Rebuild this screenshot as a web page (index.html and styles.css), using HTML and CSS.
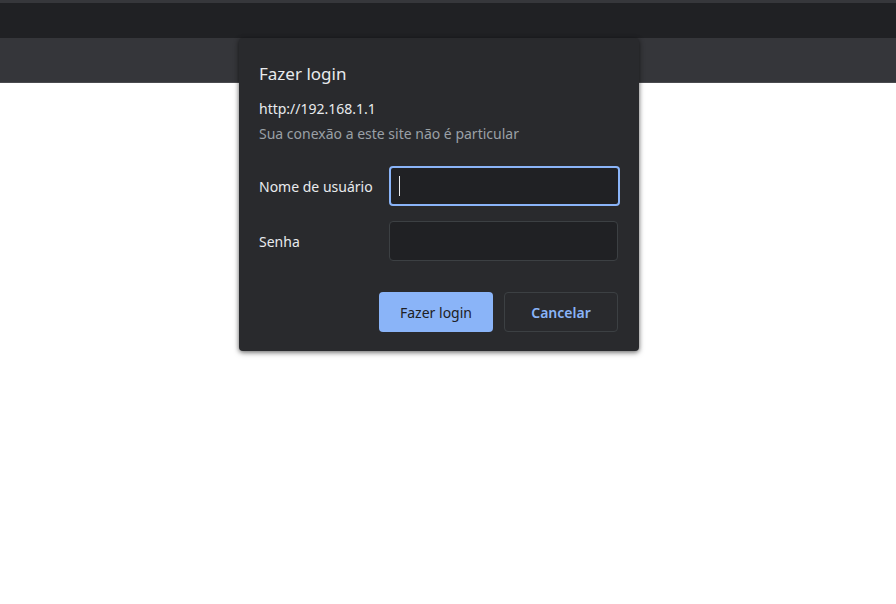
FILE: index.html
```
<!DOCTYPE html>
<html lang="pt">
<head>
<meta charset="utf-8">
<link rel="stylesheet" href="styles.css">
</head>
<body>
<div class="topline"></div>
<div class="tabbar"></div>
<div class="toolbar"></div>
<div class="page">
  <div class="dialog">
    <div class="title">Fazer login</div>
    <div class="origin">http://192.168.1.1</div>
    <div class="warn">Sua conexão a este site não é particular</div>
    <div class="fields">
      <label class="lbl">Nome de usuário</label>
      <div class="input focus"><span class="caret"></span></div>
      <label class="lbl">Senha</label>
      <div class="input"></div>
    </div>
    <div class="actions">
      <button class="btn primary">Fazer login</button>
      <button class="btn secondary">Cancelar</button>
    </div>
  </div>
</div>
</body>
</html>
```
FILE: styles.css
```
* { box-sizing: border-box; }
html, body { margin: 0; padding: 0; }
body {
  width: 896px; height: 604px; overflow: hidden;
  background: #ffffff;
  font-family: "Noto Sans", "Open Sans", sans-serif;
  position: relative;
}
.topline { height: 3px; background: #36373b; }
.tabbar { height: 35px; background: #202124; }
.toolbar { height: 45px; background: #35363a; border-bottom: 1px solid #4a4b4f; }
.page { position: absolute; left: 0; top: 38px; width: 896px; }
.dialog {
  position: absolute; left: 239px; top: 0;
  width: 400px; height: 313px;
  background: #292a2d;
  border-radius: 4px;
  box-shadow: 0 1px 4px rgba(0,0,0,0.45), 0 2px 6px rgba(0,0,0,0.25);
  padding: 24px 20px 0 20px;
  color: #e8eaed;
}
.title { font-size: 17px; line-height: 24px; color: #e8eaed; }
.origin { margin-top: 13px; font-size: 14px; line-height: 20px; color: #e8eaed; }
.warn { margin-top: 5px; font-size: 14px; line-height: 20px; color: #9aa0a6; }
.fields {
  margin-top: 22px;
  display: grid;
  grid-template-columns: 130px 230px;
  row-gap: 15px;
  align-items: center;
}
.lbl { font-size: 14px; color: #e8eaed; }
.input {
  height: 40px;
  background: #202124;
  border: 1px solid #3c4043;
  border-radius: 4px;
  position: relative;
  width: 229px;
}
.input.focus { border: 2px solid #8ab4f8; width: 231px; }
.caret { position: absolute; left: 8px; top: 8px; width: 1px; height: 20px; background: #e8eaed; }
.actions {
  margin-top: 31px;
  display: flex; justify-content: flex-end; gap: 11px;
  width: 359px;
}
.btn {
  height: 40px; width: 114px;
  border-radius: 4px;
  font-family: "Noto Sans", "Open Sans", sans-serif;
  font-size: 14px;
  cursor: pointer;
}
.primary { background: #8ab4f8; color: #202124; border: none; }
.secondary { background: transparent; color: #8ab4f8; border: 1px solid #3c4043; font-weight: 600; }
```
